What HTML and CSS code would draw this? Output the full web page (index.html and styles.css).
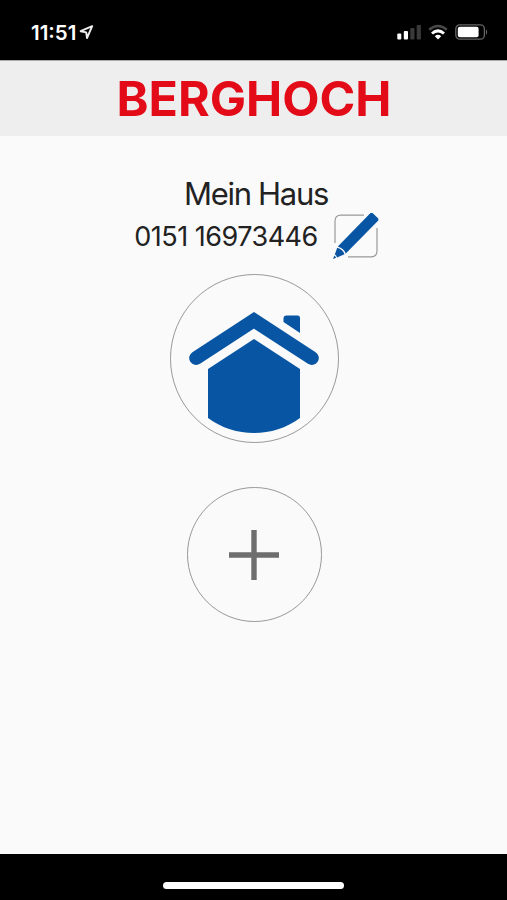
FILE: index.html
```html
<!DOCTYPE html>
<html lang="de">
<head>
  <meta charset="UTF-8">
  <title>Berghoch</title>
  <link rel="stylesheet" href="styles.css">
</head>
<body>

  <div class="statusbar">
    <div class="time">
      <span>11:51</span>
      <svg width="15" height="15" viewBox="0 0 15 15">
        <path d="M13.2 1.2 L1.6 6.2 L7.2 7.4 L8 13 Z" fill="none" stroke="#eee" stroke-width="1.9" stroke-linejoin="round"/>
      </svg>
    </div>
    <div class="status-icons">
      <svg width="24" height="16" viewBox="0 0 24 16">
        <rect x="0.3" y="9.6" width="4" height="5.9" rx="1" fill="#fff"/>
        <rect x="6.8" y="7" width="4.2" height="8.5" rx="1" fill="#fff"/>
        <rect x="13.3" y="4" width="4.2" height="11.5" rx="1" fill="#3a3a3a"/>
        <rect x="19.7" y="1" width="4.2" height="14.5" rx="1" fill="#3a3a3a"/>
      </svg>
      <svg width="20" height="16" viewBox="0 0 20 16">
        <path d="M1.2 5.8 Q10 -1.8 18.8 5.8" fill="none" stroke="#484848" stroke-width="2.6"/>
        <path d="M4 9.5 Q10 4.2 16 9.5" fill="none" stroke="#fff" stroke-width="3"/>
        <path d="M6.8 12.2 Q10 9.3 13.2 12.2 L10 15.5 Z" fill="#fff"/>
      </svg>
      <svg width="34" height="16" viewBox="0 0 34 16">
        <rect x="0.8" y="0.8" width="28.6" height="14.4" rx="4" fill="none" stroke="#666" stroke-width="1.3"/>
        <rect x="2.8" y="2.8" width="20.8" height="10.4" rx="2" fill="#fff"/>
        <path d="M31 5.2 Q33.4 8 31 10.8 Z" fill="#666"/>
      </svg>
    </div>
  </div>

  <header class="header">
    <svg class="logo" width="280" height="60" viewBox="0 0 280 60">
      <text x="2.5" y="46.5" textLength="275" lengthAdjust="spacingAndGlyphs">BERGHOCH</text>
    </svg>
  </header>

  <main class="content">
    <h1 class="name">Mein Haus</h1>
    <div class="phone-row">
      <span class="phone">0151 16973446</span>
      <svg class="edit" width="48" height="48" viewBox="0 0 48 48">
        <path d="M32 3.2 H9 Q3 3.2 3 9.2 V31 M16 44.8 H39 Q45 44.8 45 38.8 V16" fill="none" stroke="#999" stroke-width="1.2"/>
        <path d="M38.5 1 H40.5 L46.3 6.6 V8.6 L13.8 41.6 Q12 36.5 5.8 34.6 Z" fill="#0755a3"/>
        <path d="M5.2 35.8 Q11 37.3 12.5 42.3 L5 45.4 Q4.6 43.3 2.8 42.6 Z" fill="#0755a3"/>
        <path d="M2.4 43.4 L4.2 45.8 L1 47 Z" fill="#0755a3"/>
      </svg>
    </div>

    <button class="circle house">
      <svg width="170" height="170" viewBox="0 0 170 170">
        <path d="M27.2 84 L85 46.3 L142.8 84" fill="none" stroke="#0755a3" stroke-width="14" stroke-linecap="round" stroke-linejoin="miter"/>
        <path d="M39 95 L85 65 L131 95 V144 C104 164 66 164 39 144 Z" fill="#0755a3"/>
        <path d="M117.5 41.5 H128.5 Q131 41.5 131 44 V59 L114.5 48 V44.5 Q114.5 41.5 117.5 41.5 Z" fill="#0755a3"/>
      </svg>
    </button>

    <button class="circle add">
      <svg width="50" height="50" viewBox="0 0 50 50">
        <path d="M25 0 V50 M0 25 H50" stroke="#6e6e6e" stroke-width="5.4"/>
      </svg>
    </button>
  </main>

  <footer class="homebar">
    <div class="indicator"></div>
  </footer>

</body>
</html>
```
FILE: styles.css
```css
* {
  box-sizing: border-box;
}
body {
  margin: 0;
  height: 900px;
  display: flex;
  flex-direction: column;
  overflow: hidden;
  background-color: #fafafa;
  color: #222;
  font-family: Inter, "Liberation Sans", sans-serif;
}
.statusbar {
  height: 60px;
  padding: 4px 18px 0 31px;
  display: flex;
  justify-content: space-between;
  align-items: center;
  background-color: #000;
  color: #fff;
}
.time {
  display: flex;
  align-items: center;
  gap: 3px;
  font-size: 20.5px;
  font-weight: 600;
}
.status-icons {
  display: flex;
  gap: 7px;
}
.header {
  height: 76px;
  display: flex;
  justify-content: center;
  align-items: center;
  background-color: #eee;
  border-top: 1px solid #aaa;
}
.logo text {
  font-size: 48px;
  font-weight: 700;
  fill: #e30b17;
}
.content {
  flex: 1;
  display: flex;
  flex-direction: column;
  align-items: center;
  padding-top: 39px;
}
.name {
  margin: 0 0 0 5px;
  font-size: 31px;
  line-height: 38px;
  font-weight: 400;
  letter-spacing: -1.3px;
}
.phone-row {
  height: 48px;
  display: flex;
  align-items: center;
  gap: 14px;
  margin: -1px 0 0 7px;
}
.phone {
  font-size: 27px;
  letter-spacing: -0.5px;
}
.circle {
  display: flex;
  justify-content: center;
  align-items: center;
  padding: 0;
  border: 1px solid #999;
  border-radius: 50%;
  background: none;
}
.house {
  width: 169px;
  height: 169px;
  margin: 14px 0 0 1px;
}
.house svg {
  flex: none;
}
.add {
  width: 135px;
  height: 135px;
  margin: 44px 0 0 1px;
}
.homebar {
  height: 46px;
  padding-top: 28px;
  background-color: #000;
}
.indicator {
  width: 181px;
  height: 7px;
  margin: 0 auto;
  border-radius: 4px;
  background-color: #fff;
}
```
